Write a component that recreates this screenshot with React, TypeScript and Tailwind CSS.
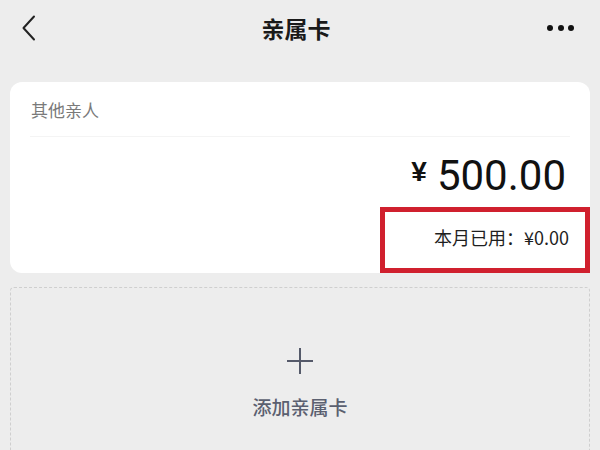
import React from "react";

export default function App() {
  const cjk = { fontFamily: '"Noto Sans CJK SC", "Noto Sans", sans-serif' };
  return (
    <div className="w-[600px] h-[450px] overflow-hidden bg-[#ededed] flex flex-col" style={cjk}>
      {/* header */}
      <div className="h-[56px] flex items-center justify-between px-[20px] shrink-0">
        <svg width="16" height="26" viewBox="0 0 16 26" className="ml-[1px]">
          <path d="M13 1.5 L2.5 13 L13 24.5" fill="none" stroke="#222" strokeWidth="2" strokeLinecap="round" strokeLinejoin="round" />
        </svg>
        <div className="text-[23px] font-bold text-[#1a1a1a] leading-none ml-[8px]">亲属卡</div>
        <div className="flex items-center gap-[4.5px] mr-[6px]">
          <span className="w-[6px] h-[6px] rounded-full bg-[#111]" />
          <span className="w-[6px] h-[6px] rounded-full bg-[#111]" />
          <span className="w-[6px] h-[6px] rounded-full bg-[#111]" />
        </div>
      </div>

      {/* card */}
      <div className="mx-[10px] mt-[26px] bg-white rounded-[12px] flex flex-col shrink-0">
        <div className="px-[21px] pt-[16px] text-[17px] leading-[24px] text-[#7a7a7a]">其他亲人</div>
        <div className="mx-[20px] mt-[14px] h-px bg-[#f4f4f4]" />
        <div className="flex justify-end items-start pr-[24px] mt-[18px]">
          <span
            className="text-[28px] leading-none font-bold text-[#111] mt-[3px] mr-[10px]"
            style={{ fontFamily: '"Liberation Sans", sans-serif' }}
          >
            ¥
          </span>
          <span
            className="text-[42px] leading-[42px] text-[#111]"
            style={{ fontFamily: 'Roboto, "Liberation Sans", sans-serif' }}
          >
            500.00
          </span>
        </div>
        <div className="self-end mt-[10px] w-[210px] h-[66px] border-[5px] border-[#d0202e] flex justify-end items-start pr-[16px] pt-[12px]">
          <span className="text-[18px] leading-[26px] text-[#1f1f1f]">本月已用：¥0.00</span>
        </div>
      </div>

      {/* add card */}
      <div className="mx-[10px] mt-[14px] h-[220px] shrink-0 border-[1.5px] border-dashed border-[#cfcfcf] rounded-[4px] flex flex-col items-center pt-[60px]">
        <svg width="26" height="26" viewBox="0 0 26 26">
          <path d="M13 0 V26 M0 13 H26" stroke="#555a6a" strokeWidth="2" />
        </svg>
        <div className="mt-[20px] text-[19px] leading-[26px] font-medium text-[#5b6070]">添加亲属卡</div>
      </div>
    </div>
  );
}
